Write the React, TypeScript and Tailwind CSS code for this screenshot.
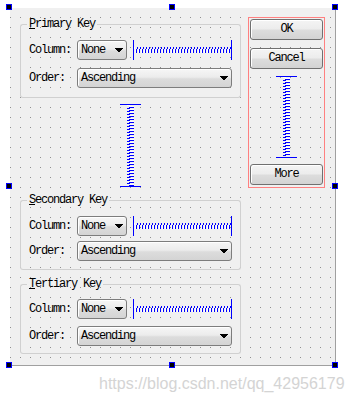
import React from 'react';

const frame = 'border-[#d0d0d0]';

function HSpacer({ width }: { width: number }) {
  const base = 10;
  let blue = '';
  let white = '';
  for (let i = 0; 2 + i * 3 < width - 2; i++) {
    const x = 1.5 + i * 3;
    white += `M${x} ${base - 3}L${x + 1.5} ${base + 3}`;
    blue += `M${x + 1.5} ${base + 3}L${x + 3} ${base - 3}`;
  }
  return (
    <svg width={width} height={20} className="block shrink-0">
      <path d={white} stroke="#ffffff" strokeWidth={1} shapeRendering="crispEdges" />
      <path d={blue} stroke="#0000ff" strokeWidth={1} shapeRendering="crispEdges" />
      <line x1={0.5} y1={0} x2={0.5} y2={20} stroke="#0000ff" />
      <line x1={width - 0.5} y1={0} x2={width - 0.5} y2={20} stroke="#0000ff" />
    </svg>
  );
}

function VSpacer({ height }: { height: number }) {
  const base = 10.5;
  let blue = '';
  let white = '';
  for (let i = 0; 2 + i * 3 < height - 2; i++) {
    const y = 1.5 + i * 3;
    white += `M${base - 3} ${y}L${base + 3} ${y + 1.5}`;
    blue += `M${base + 3} ${y + 1.5}L${base - 3} ${y + 3}`;
  }
  return (
    <svg width={21} height={height} className="block shrink-0 self-center">
      <path d={white} stroke="#ffffff" strokeWidth={1} shapeRendering="crispEdges" />
      <path d={blue} stroke="#0000ff" strokeWidth={1} shapeRendering="crispEdges" />
      <line x1={0} y1={0.5} x2={21} y2={0.5} stroke="#0000ff" />
      <line x1={0} y1={height - 0.5} x2={21} y2={height - 0.5} stroke="#0000ff" />
    </svg>
  );
}

function Arrow() {
  return (
    <svg width={8} height={5} className="block shrink-0">
      <polygon points="0,0 8,0 4,5" fill="#000" shapeRendering="crispEdges" />
    </svg>
  );
}

function Combo({ text, width }: { text: string; width: string }) {
  return (
    <div
      className={`${width} h-[20px] shrink-0 flex items-center justify-between pl-[3px] pr-[3px] border border-[#7d7d7d] rounded-[3px] bg-[linear-gradient(#f6f6f6_0%,#ececec_45%,#dcdcdc_55%,#d4d4d4_100%)] shadow-[inset_1px_1px_0_#ffffff]`}
    >
      <span className="leading-[18px]">{text}</span>
      <Arrow />
    </div>
  );
}

function Button({ text }: { text: string }) {
  return (
    <div className="w-[73px] h-[21px] shrink-0 flex items-center justify-center border border-[#707070] rounded-[3px] bg-[linear-gradient(#f4f4f4_0%,#ececec_48%,#dddddd_52%,#d3d3d3_100%)] shadow-[inset_1px_1px_0_#ffffff]">
      <span className="leading-[19px]">{text}</span>
    </div>
  );
}

function Group({
  first,
  rest,
  pt,
  gap,
  pb,
}: {
  first: string;
  rest: string;
  pt: string;
  gap: string;
  pb: string;
}) {
  return (
    <div className="flex flex-col w-[221px]">
      <div className="flex h-[12px]">
        <div className={`w-[7px] mt-[6px] border-l border-t ${frame} rounded-tl-[3px]`} />
        <span className="px-[2px] leading-[12px]">
          <span className="underline underline-offset-[1px]">{first}</span>
          {rest}
        </span>
        <div className={`flex-1 mt-[6px] border-r border-t ${frame} rounded-tr-[3px]`} />
      </div>
      <div className={`flex flex-col border-l border-r border-b ${frame} rounded-b-[3px] px-[8px] ${pt} ${gap} ${pb}`}>
        <div className="flex items-center h-[20px]">
          <span className="w-[48px] shrink-0">Column:</span>
          <Combo text="None" width="w-[50px]" />
          <div className="ml-[6px]">
            <HSpacer width={99} />
          </div>
        </div>
        <div className="flex items-center h-[20px]">
          <span className="w-[48px] shrink-0">Order:</span>
          <Combo text="Ascending" width="w-[155px]" />
        </div>
      </div>
    </div>
  );
}

function Handle({ pos }: { pos: string }) {
  return <div className={`absolute ${pos} w-[6px] h-[6px] border border-[#0000ff] bg-black`} />;
}

export default function App() {
  return (
    <div className="relative w-[352px] h-[402px] bg-white overflow-hidden font-mono text-[12px] tracking-[-1.2px] text-black">
      <div className="ml-[10px] mt-[8px] w-[326px] h-[358px] flex pl-[10px] pt-[9px] bg-[#f0f0f0] border-r border-b border-[#a0a0a0] bg-[radial-gradient(circle_at_0.5px_0.5px,#909090_0.6px,transparent_0.7px)] bg-[size:10px_10px] bg-[position:0px_9px]">
        <div className="flex flex-col mt-[1px]">
          <Group first="P" rest="rimary Key" pt="pt-[10px]" gap="gap-[8px]" pb="pb-[9px]" />
          <div className="mt-[6px] flex justify-center">
            <VSpacer height={83} />
          </div>
          <div className="mt-[7px]">
            <Group first="S" rest="econdary Key" pt="pt-[10px]" gap="gap-[5px]" pb="pb-[8px]" />
          </div>
          <div className="mt-[8px]">
            <Group first="T" rest="ertiary Key" pt="pt-[9px]" gap="gap-[7px]" pb="pb-[7px]" />
          </div>
        </div>
        <div className="ml-[7px] w-[77px] h-[171px] flex flex-col border border-[#ff8080] px-[1px] pt-[1px] pb-[2px]">
          <Button text="OK" />
          <div className="mt-[8px]">
            <Button text="Cancel" />
          </div>
          <div className="mt-[7px] flex justify-center">
            <VSpacer height={82} />
          </div>
          <div className="mt-[6px]">
            <Button text="More" />
          </div>
        </div>
      </div>

      <Handle pos="left-[6px] top-[4px]" />
      <Handle pos="left-[169px] top-[4px]" />
      <Handle pos="left-[332px] top-[4px]" />
      <Handle pos="left-[6px] top-[183px]" />
      <Handle pos="left-[332px] top-[183px]" />
      <Handle pos="left-[6px] top-[362px]" />
      <Handle pos="left-[169px] top-[362px]" />
      <Handle pos="left-[332px] top-[362px]" />

      <div className="absolute left-[99px] top-[372px] text-[16px] tracking-normal text-[#d4d4d4] font-[family-name:Liberation_Sans,Arial,sans-serif] [text-shadow:0_0_1px_#ffffff]">
        https://blog.csdn.net/qq_42956179
      </div>
    </div>
  );
}
